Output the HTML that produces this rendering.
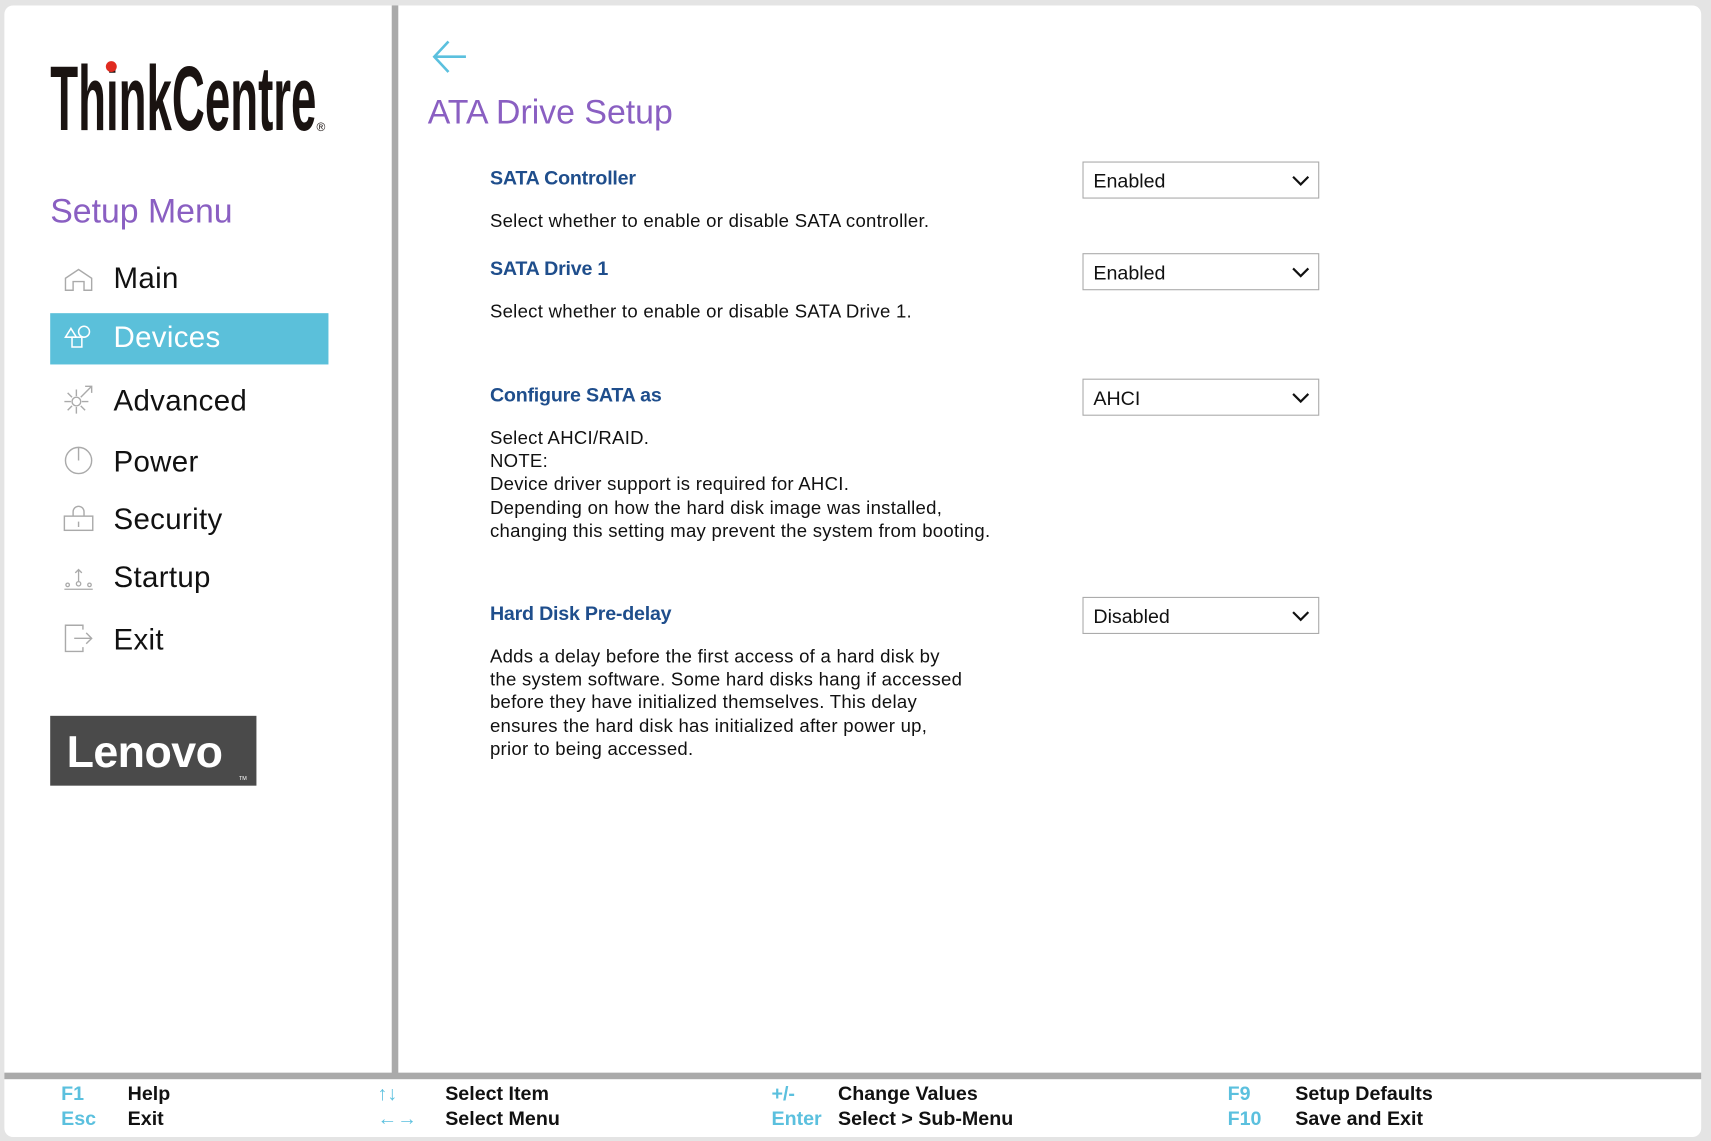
<!DOCTYPE html>
<html><head><meta charset="utf-8"><style>
html,body{margin:0;padding:0;width:1711px;height:1141px;overflow:hidden;background:#e4e4e4}
#w{position:absolute;left:0;top:0;width:1568px;height:1046px;transform:scale(1.09120);transform-origin:0 0;font-family:"Liberation Sans",sans-serif}
.card{position:absolute;left:4px;top:5px;width:1555px;height:1037px;background:#fff;border-radius:8px;overflow:hidden}
.vdiv{position:absolute;left:359px;top:5px;width:6px;height:980px;background:#aaa}
.hdiv{position:absolute;left:4px;top:983px;width:1555px;height:6px;background:#aaa}
.abs{position:absolute;white-space:nowrap}
.mi{position:absolute;left:104px;font-size:27px;color:#111;letter-spacing:0.3px}
.ic{position:absolute;left:58px;width:28px;height:28px}
.t{position:absolute;left:449px;font-size:18px;color:#1f4e8c;font-weight:bold;letter-spacing:-0.2px}
.d{position:absolute;left:449px;font-size:17px;color:#111;line-height:21.2px;letter-spacing:0.25px}
.sel{position:absolute;left:992px;width:217px;height:34px;border:1px solid #aaa;font-size:18px;color:#111;box-sizing:border-box}
.sel span{position:absolute;left:9px;top:7px}
.sel svg{position:absolute;right:8px;top:12px}
.fk{position:absolute;font-size:18px;font-weight:bold;color:#5bc0de}
.fv{position:absolute;font-size:18px;font-weight:bold;color:#111}
</style></head><body><div id="w">
<div class="card"></div>
<div class="vdiv"></div>
<div class="hdiv"></div>

<svg class="abs" style="left:40px;top:50px" width="270" height="80">
<text x="6" y="69" font-family="Liberation Sans" font-weight="bold" font-size="84" fill="#1a1311" textLength="244" lengthAdjust="spacingAndGlyphs">ThinkCentre</text>
<circle cx="62" cy="11" r="5" fill="#e02b20"/>
<text x="250" y="70" font-size="11" font-family="Liberation Sans" fill="#1a1311">®</text>
</svg>

<div class="abs" style="left:46px;top:176px;font-size:31px;color:#8a5fc2">Setup Menu</div>

<div class="abs" style="left:46px;top:287px;width:255px;height:47px;background:#5bc0da"></div>

<svg class="ic" style="top:243px" viewBox="0 0 28 28" fill="none" stroke="#aaa" stroke-width="1.3"><path d="M2 12 L14 4 L26 12 V23 H19 V15 H9 V23 H2 Z"/></svg>
<div class="mi" style="top:240px">Main</div>

<svg class="ic" style="top:296px" viewBox="0 0 28 28" fill="none" stroke="#fff" stroke-width="1.4"><path d="M2 13 L7 5 L12 13 Z"/><circle cx="19" cy="8" r="5"/><rect x="8" y="13" width="9" height="9"/></svg>
<div class="mi" style="top:294px;color:#fff">Devices</div>

<svg class="ic" style="top:352px" viewBox="0 0 28 28" fill="none" stroke="#aaa" stroke-width="1.3"><circle cx="12" cy="16" r="4"/><path d="M12 5v6M12 21v6M1 16h6M17 16h6M4 8l4 4M16 20l4 4M4 24l4-4M16 12l10-10M20 2h6v6"/></svg>
<div class="mi" style="top:352px">Advanced</div>

<svg class="ic" style="top:408px" viewBox="0 0 28 28" fill="none" stroke="#aaa" stroke-width="1.3"><circle cx="14" cy="14" r="12"/><path d="M14 2v12"/></svg>
<div class="mi" style="top:408px">Power</div>

<svg class="ic" style="top:462px" viewBox="0 0 28 28" fill="none" stroke="#aaa" stroke-width="1.3"><path d="M9 11V7a5 5 0 0 1 10 0v4"/><rect x="1" y="11" width="26" height="13"/><path d="M14 16v5"/></svg>
<div class="mi" style="top:461px">Security</div>

<svg class="ic" style="top:516px" viewBox="0 0 28 28" fill="none" stroke="#aaa" stroke-width="1.2"><path d="M1 24h26"/><circle cx="4" cy="20" r="1.6"/><circle cx="14" cy="19" r="2"/><circle cx="24" cy="20" r="1.6"/><path d="M14 17V6M11 9l3-3 3 3"/></svg>
<div class="mi" style="top:514px">Startup</div>

<svg class="ic" style="top:571px" viewBox="0 0 28 28" fill="none" stroke="#aaa" stroke-width="1.3"><path d="M18 6V2H2v24h16v-4M10 14h16M21 9l5 5-5 5"/></svg>
<div class="mi" style="top:571px">Exit</div>

<div class="abs" style="left:46px;top:656px;width:189px;height:64px;background:#4a4a4a"></div>
<div class="abs" style="left:61px;top:666px;font-size:41px;color:#fff;font-weight:bold;letter-spacing:-0.5px">Lenovo</div>
<div class="abs" style="left:219px;top:711px;font-size:5px;color:#fff">TM</div>

<svg class="abs" style="left:395px;top:36px" width="36" height="32" viewBox="0 0 36 32" fill="none" stroke="#5bc0de" stroke-width="2.4"><path d="M32 16H3M16 2L3 16l13 14"/></svg>
<div class="abs" style="left:392px;top:85px;font-size:31px;color:#8a5fc2">ATA Drive Setup</div>

<div class="t" style="top:153px">SATA Controller</div>
<div class="d" style="top:192px">Select whether to enable or disable SATA controller.</div>
<div class="sel" style="top:148px"><span>Enabled</span><svg width="16" height="10" viewBox="0 0 16 10" fill="none" stroke="#111" stroke-width="2"><path d="M1 1l7 7 7-7"/></svg></div>

<div class="t" style="top:236px">SATA Drive 1</div>
<div class="d" style="top:275px">Select whether to enable or disable SATA Drive 1.</div>
<div class="sel" style="top:232px"><span>Enabled</span><svg width="16" height="10" viewBox="0 0 16 10" fill="none" stroke="#111" stroke-width="2"><path d="M1 1l7 7 7-7"/></svg></div>

<div class="t" style="top:352px">Configure SATA as</div>
<div class="d" style="top:391px">Select AHCI/RAID.<br>NOTE:<br>Device driver support is required for AHCI.<br>Depending on how the hard disk image was installed,<br>changing this setting may prevent the system from booting.</div>
<div class="sel" style="top:347px"><span>AHCI</span><svg width="16" height="10" viewBox="0 0 16 10" fill="none" stroke="#111" stroke-width="2"><path d="M1 1l7 7 7-7"/></svg></div>

<div class="t" style="top:552px">Hard Disk Pre-delay</div>
<div class="d" style="top:591px">Adds a delay before the first access of a hard disk by<br>the system software. Some hard disks hang if accessed<br>before they have initialized themselves. This delay<br>ensures the hard disk has initialized after power up,<br>prior to being accessed.</div>
<div class="sel" style="top:547px"><span>Disabled</span><svg width="16" height="10" viewBox="0 0 16 10" fill="none" stroke="#111" stroke-width="2"><path d="M1 1l7 7 7-7"/></svg></div>

<div class="fk" style="left:56px;top:992px">F1</div><div class="fv" style="left:117px;top:992px">Help</div>
<div class="fk" style="left:56px;top:1015px">Esc</div><div class="fv" style="left:117px;top:1015px">Exit</div>
<div class="fk" style="left:346px;top:992px;font-weight:normal">↑↓</div><div class="fv" style="left:408px;top:992px">Select Item</div>
<div class="fk" style="left:346px;top:1015px;font-weight:normal">←→</div><div class="fv" style="left:408px;top:1015px">Select Menu</div>
<div class="fk" style="left:707px;top:992px">+/-</div><div class="fv" style="left:768px;top:992px">Change Values</div>
<div class="fk" style="left:707px;top:1015px">Enter</div><div class="fv" style="left:768px;top:1015px">Select &gt; Sub-Menu</div>
<div class="fk" style="left:1125px;top:992px">F9</div><div class="fv" style="left:1187px;top:992px">Setup Defaults</div>
<div class="fk" style="left:1125px;top:1015px">F10</div><div class="fv" style="left:1187px;top:1015px">Save and Exit</div>
</div></body></html>
